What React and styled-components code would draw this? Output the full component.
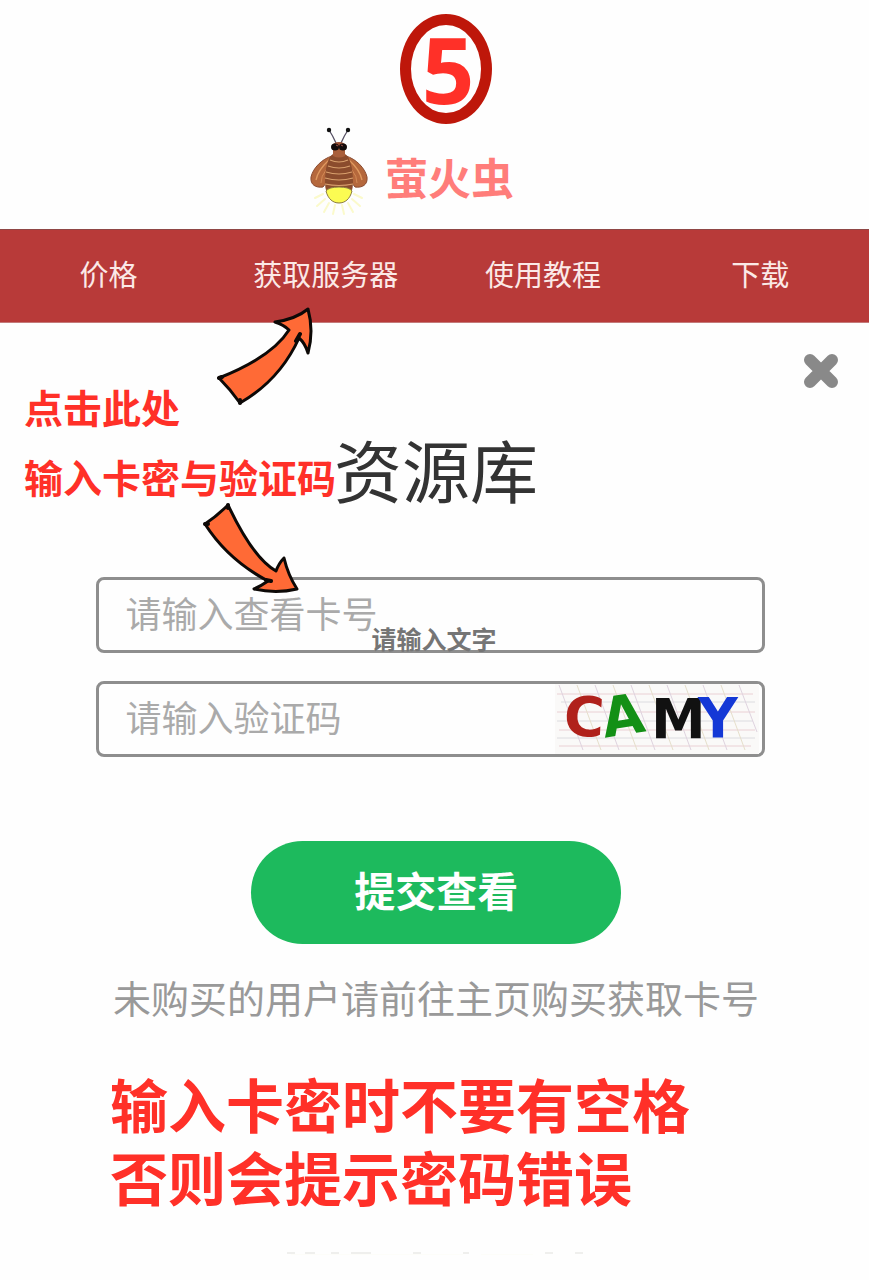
import React from 'react'
import styled, { createGlobalStyle } from 'styled-components'

const GlobalStyle = createGlobalStyle`
  * {
    box-sizing: border-box;
  }

  body {
    margin: 0;
    background: #fefefe;
    font-family: "Noto Sans CJK SC", "Noto Sans", sans-serif;
  }
`;

const Header = styled.header`
  display: flex;
  flex-direction: column;
  align-items: center;
  padding-top: 14px;
`;

const StepBadge = styled.div`
  display: flex;
  align-items: center;
  justify-content: center;
  width: 92px;
  height: 110px;
  margin-left: 23px;
  padding-left: 4px;
  border: 11px solid #be170a;
  border-radius: 50%;
  color: #ff3028;
  font-family: "Noto Sans", sans-serif;
  font-size: 92px;
  font-weight: 700;
  line-height: 88px;
`;

const Brand = styled.a`
  display: flex;
  align-items: center;
  gap: 14px;
  height: 103px;
  margin: 0 46px 2px 0;
  color: #ff7d7a;
  font-size: 43px;
  font-weight: 700;
  line-height: 60px;
  text-decoration: none;

  svg {
    display: block;
    margin-top: -9px;
  }
`;

const Nav = styled.nav`
  display: grid;
  grid-template-columns: repeat(4, 1fr);
  height: 94px;
  background: #b83a39;
  border-top: 1px solid #8f4645;
  border-bottom: 1px solid #c47a7a;
`;

const NavLink = styled.a`
  display: flex;
  align-items: center;
  justify-content: center;
  padding-bottom: 6px;
  color: #fbe9e7;
  font-size: 29px;
  text-decoration: none;
`;

const Main = styled.main`
  position: relative;
  padding: 30px 0 20px;
`;

const CloseRow = styled.div`
  display: flex;
  justify-content: flex-end;
  padding-right: 30px;
`;

const CloseButton = styled.button`
  width: 36px;
  height: 36px;
  padding: 0;
  border: 0;
  background: none;
  cursor: pointer;

  svg {
    display: block;
  }
`;

const Title = styled.h1`
  margin: 40px 0 68px;
  padding-left: 3px;
  color: #333;
  font-size: 68px;
  font-weight: 400;
  line-height: 80px;
  text-align: center;
`;

const Form = styled.form`
  display: flex;
  flex-direction: column;
  gap: 28px;
  padding: 0 12% 0 11%;
`;

const Field = styled.div`
  position: relative;
  display: flex;
  align-items: center;
  height: 76px;
  padding: 0 3px 0 27px;
  border: 3px solid #8e8e8e;
  border-radius: 8px;
  background: #fefefe;
`;

const FieldInput = styled.input`
  flex: 1;
  min-width: 0;
  height: 100%;
  padding: 0 0 6px;
  border: 0;
  outline: 0;
  background: none;
  color: #333;
  font-family: inherit;
  font-size: 36px;

  &::placeholder {
    color: #aaa;
    opacity: 1;
  }
`;

const FieldTip = styled.span`
  position: absolute;
  left: 273px;
  bottom: -4px;
  color: #757575;
  font-size: 25px;
  font-weight: 700;
  line-height: 32px;
`;

const SubmitButton = styled.button`
  align-self: center;
  width: 370px;
  height: 103px;
  margin: 56px 0 0 12px;
  padding: 0 0 7px;
  border: 0;
  border-radius: 52px;
  background: #1dba5d;
  color: #fff;
  font-family: inherit;
  font-size: 41px;
  font-weight: 700;
  cursor: pointer;
`;

const Note = styled.p`
  margin: 25px 0 42px;
  padding-left: 3px;
  color: #999;
  font-size: 38px;
  line-height: 56px;
  text-align: center;
`;

const Warning = styled.p`
  margin: 0;
  padding-left: 110px;
  color: #ff3028;
  font-size: 58px;
  font-weight: 700;
  line-height: 73px;
`;

const Residue = styled.svg`
  display: block;
  margin: 38px auto 0;
`;

/* hints and arrows lie over the page */
const Hint = styled.div`
  position: absolute;
  left: 24px;
  top: ${props => props.$top}px;
  color: #ff3028;
  font-size: 39px;
  font-weight: 700;
  line-height: 50px;
  pointer-events: none;
`;

const Arrow = styled.svg`
  position: absolute;
  left: ${props => props.$left}px;
  top: ${props => props.$top}px;
  fill: #ff6a36;
  stroke: #0d0907;
  stroke-width: 3;
  stroke-linejoin: round;
  stroke-linecap: round;
  pointer-events: none;
`;

const links = ['价格', '获取服务器', '使用教程', '下载']

const Firefly = () => (
  <svg width="62" height="90" viewBox="0 0 62 90" aria-hidden="true">
    <g stroke="#fbfacb" strokeWidth="2" strokeLinecap="round">
      <path d="M14 68L6 72M16 73L8 80M20 77L15 86M26 79L24 88M33 79L35 88M39 77L44 86M43 73L51 80M45 68L53 72" />
    </g>
    <g fill="none" stroke="#565064" strokeWidth="1.3">
      <path d="M20 4Q24 10 27 17M39 4Q35 10 32 17" />
    </g>
    <circle cx="20" cy="4" r="2.2" fill="#111" />
    <circle cx="39" cy="4" r="2.2" fill="#111" />
    <path d="M23 30C13 33 4 42 2 51C1 59 7 62 14 61C20 55 22 40 23 30Z" fill="#b5683c" stroke="#8a4b31" />
    <path d="M37 30C47 33 56 42 58 51C59 59 53 62 46 61C40 55 38 40 37 30Z" fill="#b5683c" stroke="#8a4b31" />
    <path d="M20 34Q9 44 7 54M40 34Q51 44 53 54" fill="none" stroke="#e09a60" strokeWidth="1.3" />
    <path d="M17 44Q12 50 12 57M43 44Q48 50 48 57" fill="none" stroke="#d38a56" />
    <path d="M24 28C19 31 16 42 16 56C16 70 23 77 30 77C37 77 44 70 44 56C44 42 41 31 36 28Z" fill="#8b4c2d" />
    <path d="M21 34Q30 38 39 34M19 40Q30 44 41 40M17 46Q30 50 43 46M16 52Q30 56 44 52M16 58Q30 61 44 58" fill="none" stroke="#d9a06d" strokeWidth="1.2" />
    <path d="M17 65Q20 61 30 61Q40 61 43 65C41 73 36 77 30 77C24 77 19 73 17 65Z" fill="#fbfb52" stroke="#8d8045" />
    <path d="M24 23H36L36 30Q30 33 24 30Z" fill="#a95f3b" />
    <ellipse cx="30" cy="20" rx="7" ry="4" fill="#9b5134" />
    <ellipse cx="26" cy="21" rx="4" ry="3.500" fill="#120b0b" />
    <ellipse cx="34" cy="21" rx="4" ry="3.500" fill="#120b0b" />
    <path d="M27 19l2 1M32 19l2 1" stroke="#a0524a" />
  </svg>
)

const Captcha = () => (
  <svg width="204" height="70" viewBox="0 0 204 70" role="img" aria-label="CAMY">
    <rect width="204" height="70" fill="#faf9f8" />
    <g fill="none" strokeWidth="1">
      <path d="M2 10H198M2 28H200M4 46H200M4 62H196" stroke="#ead0d4" />
      <path d="M6 18H200M2 37H198M2 54H200" stroke="#dcdce0" />
      <path d="M4 1L28 66M40 1L64 66M76 1L100 66M112 1L136 66M148 1L172 66M184 1L202 48" stroke="#dfd3df" />
      <path d="M22 1L46 66M58 1L82 66M94 1L118 66M130 1L154 66M166 1L190 66" stroke="#e6dfcb" />
    </g>
    <g fontFamily="DejaVu Sans" fontWeight="700" fontSize="55">
      <text x="9" y="52" fill="#b0211b" transform="rotate(3 28 32)">C</text>
      <text x="47" y="51" fill="#139016" transform="rotate(-9 66 35)">A</text>
      <text x="96" y="54" fill="#111">M</text>
      <text x="143" y="53" fill="#1438d6">Y</text>
    </g>
  </svg>
)

const App = () => {
  return (
    <>
      <GlobalStyle />
      <Header>
        <StepBadge>5</StepBadge>
        <Brand href="#">
          <Firefly />
          萤火虫
        </Brand>
      </Header>
      <Nav>
        {links.map(link => (
          <NavLink href="#" key={link}>{link}</NavLink>
        ))}
      </Nav>
      <Main>
        <CloseRow>
          <CloseButton type="button" aria-label="关闭">
            <svg width="36" height="36" viewBox="0 0 36 36">
              <path d="M7 7L29 29M29 7L7 29" stroke="#898989" strokeWidth="12" strokeLinecap="round" />
            </svg>
          </CloseButton>
        </CloseRow>
        <Title>资源库</Title>
        <Form onSubmit={e => e.preventDefault()}>
          <Field>
            <FieldInput aria-label="查看卡号" placeholder="请输入查看卡号" />
            <FieldTip>请输入文字</FieldTip>
          </Field>
          <Field>
            <FieldInput aria-label="验证码" placeholder="请输入验证码" />
            <Captcha />
          </Field>
          <SubmitButton type="submit">提交查看</SubmitButton>
        </Form>
        <Note>未购买的用户请前往主页购买获取卡号</Note>
        <Warning>
          输入卡密时不要有空格
          <br />
          否则会提示密码错误
        </Warning>
        <Residue width="304" height="4" viewBox="0 0 304 4" aria-hidden="true">
          <path d="M4 2H12M22 2H32M48 2H56M68 2H88M130 2H138M180 2H186M262 2H270M292 2H300" stroke="#efefed" strokeWidth="2" />
          <path d="M8 4H180M198 4H250" stroke="#fdfcf4" />
        </Residue>

        <Hint $top={58}>点击此处</Hint>
        <Hint $top={128}>输入卡密与验证码</Hint>
        <Arrow $left={212} $top={-21} width="108" height="108" viewBox="0 0 108 108" aria-hidden="true">
          <path d="M7 76Q60 55 77 28Q72 23 63 20Q84 17 96 7Q102 29 96 51Q93 41 87 36Q68 78 28 101Q18 87 7 76Z" />
          <path d="M88 32L84 39M7 76L10 75M28 98L28 101" strokeWidth="4" />
        </Arrow>
        <Arrow $left={200} $top={178} width="104" height="98" viewBox="0 0 104 98" aria-hidden="true">
          <path d="M28 4Q17 15 5 23Q28 59 68 80Q61 85 54 88Q76 93 97 88Q88 74 84 57Q79 62 76 70Q53 57 28 4Z" />
          <path d="M66 79L71 80M5 23L8 23M28 4L28 7" strokeWidth="4" />
        </Arrow>
      </Main>
    </>
  )
}

export default App;
